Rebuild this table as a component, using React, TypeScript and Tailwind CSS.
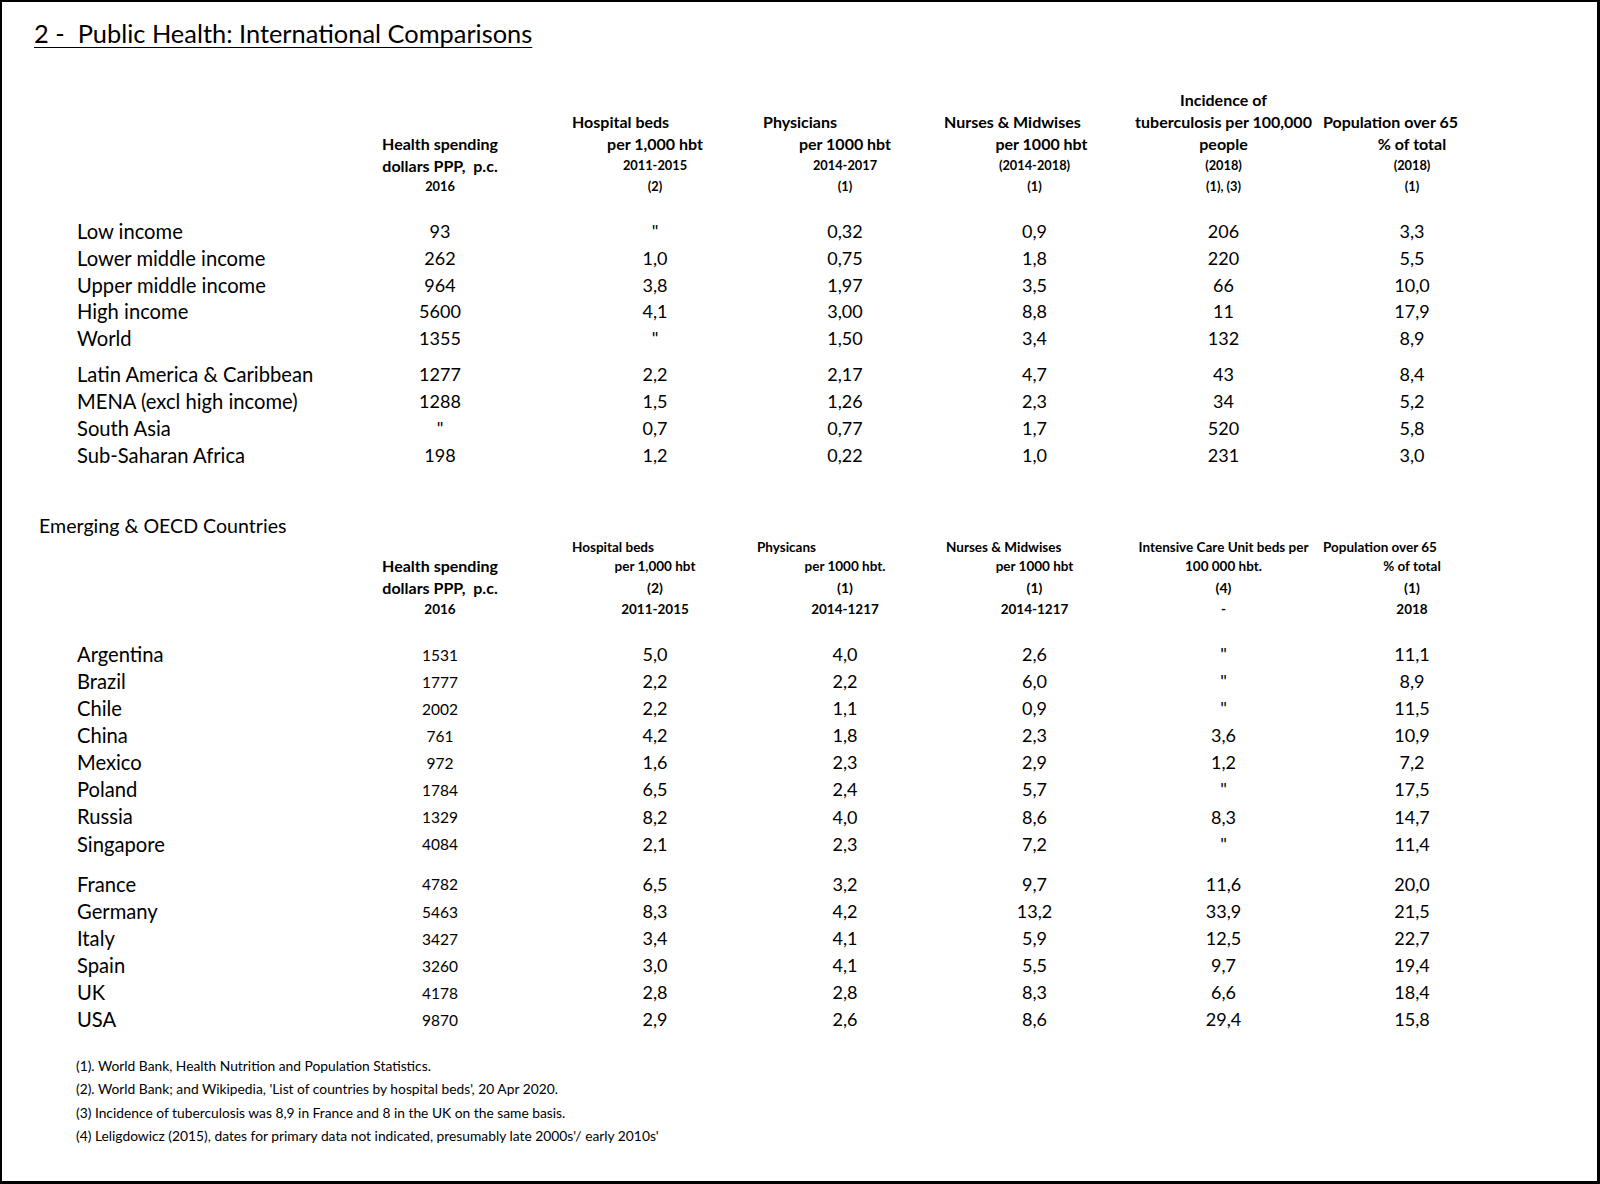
import React from 'react'

type Line = { t: string; c?: string }

const GRID = 'grid grid-cols-[255px_216px_202px_190px_189px_189px_188px]'

const S1_HEIGHTS = ['h-[22px]', 'h-[22px]', 'h-[22px]', 'h-[21px]', 'h-[20px]']
const S2_HEIGHTS = ['h-[18px]', 'h-[20px]', 'h-[24px]', 'h-[18px]']

// text sizes for header lines
const BIG = 'text-[16px] font-bold'
const SMALL = 'text-[12.8px] font-bold'
const MID = 'text-[13.5px] font-bold'
const PAREN = 'text-[14px] font-bold'

// second column sits a little right of its cell centre
const COL_PAD = ['', '', 'pl-[12px]', '', '', '', '']

const s1Head: Line[][] = [
  [{ t: '' }, { t: '' }, { t: '' }, { t: '' }, { t: '' }],
  [{ t: '' }, { t: '' }, { t: 'Health spending', c: BIG }, { t: 'dollars PPP,  p.c.', c: BIG }, { t: '2016', c: SMALL }],
  [{ t: '' }, { t: 'Hospital beds', c: `${BIG} justify-start pl-[24px]` }, { t: 'per 1,000 hbt', c: `${BIG} pl-[12px]` }, { t: '2011-2015', c: `${SMALL} pl-[12px]` }, { t: '(2)', c: `${SMALL} pl-[12px]` }],
  [{ t: '' }, { t: 'Physicians', c: `${BIG} justify-start pl-[13px]` }, { t: 'per 1000 hbt', c: BIG }, { t: '2014-2017', c: SMALL }, { t: '(1)', c: SMALL }],
  [{ t: '' }, { t: 'Nurses & Midwises', c: `${BIG} justify-start pl-[4px]` }, { t: 'per 1000 hbt', c: `${BIG} pl-[14px]` }, { t: '(2014-2018)', c: SMALL }, { t: '(1)', c: SMALL }],
  [{ t: 'Incidence of', c: BIG }, { t: 'tuberculosis per 100,000', c: BIG }, { t: 'people', c: BIG }, { t: '(2018)', c: SMALL }, { t: '(1), (3)', c: SMALL }],
  [{ t: '' }, { t: 'Population over 65', c: `${BIG} justify-start pl-[5px]` }, { t: '% of total', c: BIG }, { t: '(2018)', c: SMALL }, { t: '(1)', c: SMALL }],
]

const s2Head: Line[][] = [
  [{ t: '' }, { t: '' }, { t: '' }, { t: '' }],
  [{ t: '' }, { t: 'Health spending', c: BIG }, { t: 'dollars PPP,  p.c.', c: BIG }, { t: '2016', c: MID }],
  [{ t: 'Hospital beds', c: `${MID} justify-start pl-[24px]` }, { t: 'per 1,000 hbt', c: `${MID} pl-[12px]` }, { t: '(2)', c: `${PAREN} pl-[12px]` }, { t: '2011-2015', c: `${MID} pl-[12px]` }],
  [{ t: 'Physicans', c: `${MID} justify-start pl-[7px]` }, { t: 'per 1000 hbt.', c: MID }, { t: '(1)', c: PAREN }, { t: '2014-1217', c: MID }],
  [{ t: 'Nurses & Midwises', c: `${MID} justify-start pl-[6px]` }, { t: 'per 1000 hbt', c: MID }, { t: '(1)', c: PAREN }, { t: '2014-1217', c: MID }],
  [{ t: 'Intensive Care Unit beds per', c: MID }, { t: '100 000 hbt.', c: MID }, { t: '(4)', c: PAREN }, { t: '-', c: MID }],
  [{ t: 'Population over 65', c: `${MID} justify-start pl-[5px]` }, { t: '% of total', c: MID }, { t: '(1)', c: PAREN }, { t: '2018', c: MID }],
]

const regions1 = [
  ['Low income', '93', '"', '0,32', '0,9', '206', '3,3'],
  ['Lower middle income', '262', '1,0', '0,75', '1,8', '220', '5,5'],
  ['Upper middle income', '964', '3,8', '1,97', '3,5', '66', '10,0'],
  ['High income', '5600', '4,1', '3,00', '8,8', '11', '17,9'],
  ['World', '1355', '"', '1,50', '3,4', '132', '8,9'],
]
const regions2 = [
  ['Latin America & Caribbean', '1277', '2,2', '2,17', '4,7', '43', '8,4'],
  ['MENA (excl high income)', '1288', '1,5', '1,26', '2,3', '34', '5,2'],
  ['South Asia', '"', '0,7', '0,77', '1,7', '520', '5,8'],
  ['Sub-Saharan Africa', '198', '1,2', '0,22', '1,0', '231', '3,0'],
]
const emerging = [
  ['Argentina', '1531', '5,0', '4,0', '2,6', '"', '11,1'],
  ['Brazil', '1777', '2,2', '2,2', '6,0', '"', '8,9'],
  ['Chile', '2002', '2,2', '1,1', '0,9', '"', '11,5'],
  ['China', '761', '4,2', '1,8', '2,3', '3,6', '10,9'],
  ['Mexico', '972', '1,6', '2,3', '2,9', '1,2', '7,2'],
  ['Poland', '1784', '6,5', '2,4', '5,7', '"', '17,5'],
  ['Russia', '1329', '8,2', '4,0', '8,6', '8,3', '14,7'],
  ['Singapore', '4084', '2,1', '2,3', '7,2', '"', '11,4'],
]
const oecd = [
  ['France', '4782', '6,5', '3,2', '9,7', '11,6', '20,0'],
  ['Germany', '5463', '8,3', '4,2', '13,2', '33,9', '21,5'],
  ['Italy', '3427', '3,4', '4,1', '5,9', '12,5', '22,7'],
  ['Spain', '3260', '3,0', '4,1', '5,5', '9,7', '19,4'],
  ['UK', '4178', '2,8', '2,8', '8,3', '6,6', '18,4'],
  ['USA', '9870', '2,9', '2,6', '8,6', '29,4', '15,8'],
]

const notes = [
  '(1). World Bank, Health Nutrition and Population Statistics.',
  "(2). World Bank; and Wikipedia, 'List of countries by hospital beds', 20 Apr 2020.",
  '(3) Incidence of tuberculosis was 8,9 in France and 8 in the UK on the same basis.',
  "(4) Leligdowicz (2015), dates for primary data not indicated, presumably late 2000s'/ early 2010s'",
]

function Header({ cols, heights }: { cols: Line[][]; heights: string[] }) {
  return (
    <div className={GRID}>
      {cols.map((lines, i) => (
        <div key={i} className="flex flex-col">
          {lines.map((l, j) => (
            <div
              key={j}
              className={`${heights[j]} flex items-center justify-center whitespace-pre leading-none ${l.c ?? ''}`}
            >
              {l.t}
            </div>
          ))}
        </div>
      ))}
    </div>
  )
}

function Rows({ rows, rowH, smallFirst = false }: { rows: string[][]; rowH: string; smallFirst?: boolean }) {
  return (
    <div className="flex flex-col">
      {rows.map((r) => (
        <div key={r[0]} className={`${GRID} ${rowH} items-center`}>
          {r.map((cell, i) => (
            <div
              key={i}
              className={
                i === 0
                  ? 'text-[20.2px] leading-none'
                  : i === 1 && smallFirst
                    ? 'text-center text-[15.5px] leading-none pt-[3px]'
                    : `text-center text-[18px] leading-none ${COL_PAD[i]}`
              }
            >
              {cell}
            </div>
          ))}
        </div>
      ))}
    </div>
  )
}

export default function App() {
  return (
    <div className="w-[1600px] h-[1184px] box-border bg-white text-black border-t-2 border-l-2 border-r-[3px] border-b-[3px] border-black font-['Lato',sans-serif]">
      <h1 className="mt-[15px] ml-[32px] h-[32px] flex items-center text-[25.4px] whitespace-pre underline decoration-1 underline-offset-[4px]">
        2 -  Public Health: International Comparisons
      </h1>

      <div className="ml-[75px] mt-[40px]">
        <Header cols={s1Head} heights={S1_HEIGHTS} />
        <div className="mt-[22px]">
          <Rows rows={regions1} rowH="h-[26.7px]" />
        </div>
        <div className="mt-[9px]">
          <Rows rows={regions2} rowH="h-[27px]" />
        </div>
      </div>

      <div className="mt-[44px] ml-[37px] h-[26px] flex items-center text-[19.6px]">
        Emerging &amp; OECD Countries
      </div>

      <div className="ml-[75px]">
        <Header cols={s2Head} heights={S2_HEIGHTS} />
        <div className="mt-[22px]">
          <Rows rows={emerging} rowH="h-[27.1px]" smallFirst />
        </div>
        <div className="mt-[13px]">
          <Rows rows={oecd} rowH="h-[27.1px]" smallFirst />
        </div>
      </div>

      <div className="ml-[74px] mt-[22px] flex flex-col">
        {notes.map((n) => (
          <div key={n} className="h-[23.3px] flex items-center text-[13.8px]">
            {n}
          </div>
        ))}
      </div>
    </div>
  )
}
